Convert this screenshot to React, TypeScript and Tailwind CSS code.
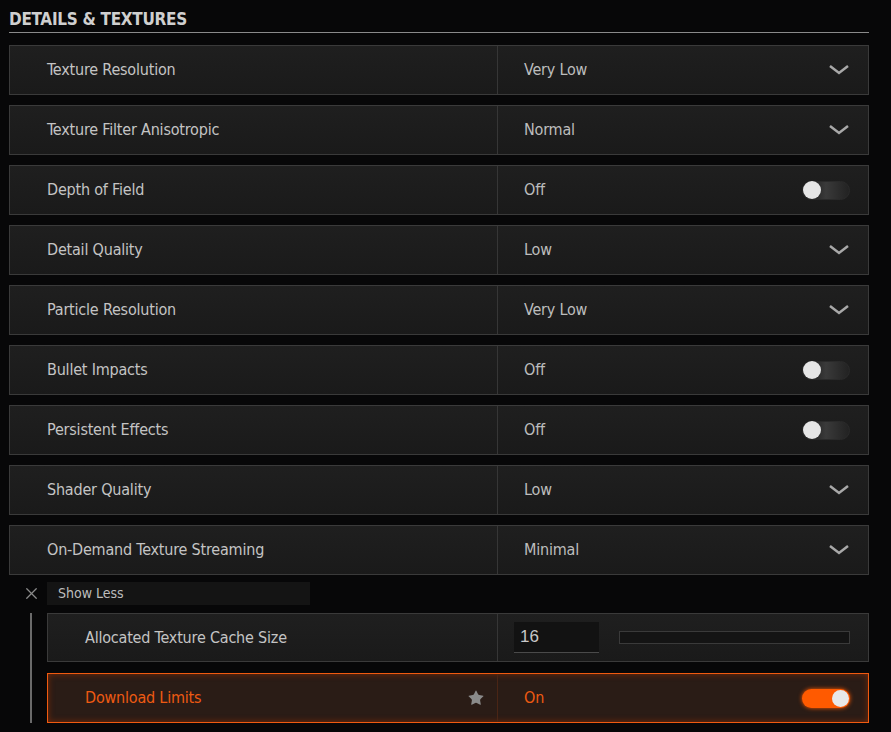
import { Star, X } from "lucide-react";

const font = { fontFamily: '"Liberation Sans Narrow", "DejaVu Sans Condensed", "Liberation Sans", sans-serif' };

type Row = { label: string; value: string; kind: "select" | "toggle" };

const rows: Row[] = [
  { label: "Texture Resolution", value: "Very Low", kind: "select" },
  { label: "Texture Filter Anisotropic", value: "Normal", kind: "select" },
  { label: "Depth of Field", value: "Off", kind: "toggle" },
  { label: "Detail Quality", value: "Low", kind: "select" },
  { label: "Particle Resolution", value: "Very Low", kind: "select" },
  { label: "Bullet Impacts", value: "Off", kind: "toggle" },
  { label: "Persistent Effects", value: "Off", kind: "toggle" },
  { label: "Shader Quality", value: "Low", kind: "select" },
  { label: "On-Demand Texture Streaming", value: "Minimal", kind: "select" },
];

function Chevron() {
  return (
    <svg width="22" height="12" viewBox="0 0 22 12" className="text-[#a8a8a8]">
      <path d="M2 2 L11 9 L20 2" fill="none" stroke="currentColor" strokeWidth="2.5" />
    </svg>
  );
}

function Toggle({ on }: { on?: boolean }) {
  return on ? (
    <div className="w-[48px] h-[19px] rounded-full bg-[#ff5a00] flex items-center justify-end pr-[1px] shadow-[0_0_4px_#ff5a00]">
      <div className="w-[17px] h-[17px] rounded-full bg-[#e8e8e8]" />
    </div>
  ) : (
    <div className="w-[48px] h-[19px] rounded-full bg-gradient-to-r from-[#151515] via-[#3a3a3a] to-[#222] border border-[#2a2a2a] flex items-center">
      <div className="w-[18px] h-[18px] rounded-full bg-[#e6e6e6]" />
    </div>
  );
}

function SettingRow({ row }: { row: Row }) {
  return (
    <div className="flex h-[50px] border border-[#3a3a3a] bg-gradient-to-b from-[#1f1f1f] to-[#1a1a1a]">
      <div className="w-[488px] flex items-center pl-[37px] border-r border-[#363636] text-[#c4c4c4] text-[16px] tracking-[-0.2px]">
        {row.label}
      </div>
      <div className="flex-1 flex items-center justify-between pl-[26px] pr-[18px] text-[#bdbdbd] text-[16px] tracking-[-0.2px]">
        <span>{row.value}</span>
        {row.kind === "select" ? <Chevron /> : <Toggle />}
      </div>
    </div>
  );
}

export default function App() {
  return (
    <div className="w-[891px] h-[732px] overflow-hidden bg-[#070708] pl-[9px] pr-[22px] pt-[8px]" style={font}>
      <h1 className="text-[17px] font-bold text-[#cfcfcf] tracking-[-0.3px] leading-[22px] uppercase">Details &amp; Textures</h1>
      <div className="h-[1px] bg-[#8a8a8a] mt-[2px] mb-[12px]" />
      <div className="flex flex-col gap-[10px]">
        {rows.map((r) => (
          <SettingRow key={r.label} row={r} />
        ))}
      </div>
      <div className="flex items-center mt-[7px] h-[23px]">
        <div className="w-[38px] flex justify-center pl-[6px]">
          <X size={19} strokeWidth={1.6} className="text-[#8a8a8a]" />
        </div>
        <div className="w-[263px] h-[23px] bg-[#141414] flex items-center pl-[11px] text-[#bdbdbd] text-[14px]">
          Show Less
        </div>
      </div>
      <div className="flex mt-[8px]">
        <div className="w-[38px] flex justify-center">
          <div className="w-[2px] bg-[#6a6a6a] h-full ml-[6px]" />
        </div>
        <div className="flex-1 flex flex-col gap-[11px]">
          <div className="flex h-[49px] border border-[#3a3a3a] bg-gradient-to-b from-[#1f1f1f] to-[#1a1a1a]">
            <div className="w-[450px] flex items-center pl-[37px] border-r border-[#363636] text-[#c4c4c4] text-[16px] tracking-[-0.2px]">
              Allocated Texture Cache Size
            </div>
            <div className="flex-1 flex items-center pl-[16px] pr-[18px] gap-[20px]">
              <div className="w-[85px] h-[31px] bg-[#121212] border-b border-[#4a4a4a] flex items-center pl-[6px] text-[#c8c8c8] text-[17px]" style={{ fontFamily: '"Liberation Sans", sans-serif' }}>
                16
              </div>
              <div className="flex-1 h-[13px] bg-[#141414] border border-[#3a3a3a]" />
            </div>
          </div>
          <div className="flex h-[50px] border border-[#f05a10] bg-[#2a1c16] shadow-[inset_0_0_6px_#7a2a08]">
            <div className="w-[450px] flex items-center justify-between pl-[37px] pr-[12px] border-r border-[#4a2515] text-[#ee5a12] text-[16px] tracking-[-0.2px]">
              <span>Download Limits</span>
              <Star size={18} fill="#8a8a8a" strokeWidth={0} className="text-[#8a8a8a]" />
            </div>
            <div className="flex-1 flex items-center justify-between pl-[26px] pr-[18px] text-[#ee5a12] text-[16px] tracking-[-0.2px]">
              <span>On</span>
              <Toggle on />
            </div>
          </div>
        </div>
      </div>
    </div>
  );
}
